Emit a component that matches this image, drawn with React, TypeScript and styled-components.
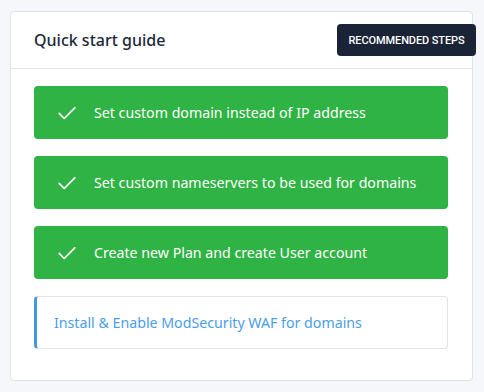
import React from 'react';
import styled, { createGlobalStyle } from 'styled-components';

const GlobalStyle = createGlobalStyle`
  body {
    margin: 0;
    background: #f5f7fb;
    font-family: 'Noto Sans', 'Inter', sans-serif;
  }
`;

const Page = styled.div`
  width: 484px;
  height: 392px;
  padding: 11px 11px 0 10px;
  box-sizing: border-box;
`;

const Card = styled.div`
  position: relative;
  width: 463px;
  height: 370px;
  box-sizing: border-box;
  background: #fff;
  border: 1px solid #dfe3ea;
  border-radius: 4px;
`;

const CardHeader = styled.div`
  height: 56px;
  display: flex;
  align-items: center;
  padding: 0 23px;
  border-bottom: 1px solid #dfe3ea;
`;

const Title = styled.h3`
  margin: 0 0 1px;
  font-size: 16px;
  font-weight: 500;
  color: #1d273b;
`;

const Tooltip = styled.div`
  position: absolute;
  top: 12px;
  right: -4px;
  width: 139px;
  height: 32px;
  box-sizing: border-box;
  display: flex;
  align-items: center;
  justify-content: center;
  background: #1b2436;
  border-radius: 4px;
  color: #fff;
  font-family: 'Roboto', 'Noto Sans', sans-serif;
  font-size: 11px;
  font-weight: 500;
  letter-spacing: -0.1px;
`;

const StepList = styled.div`
  display: flex;
  flex-direction: column;
  gap: 17px;
  padding: 17px 24px 0 23px;
`;

const Step = styled.div<{ $done?: boolean }>`
  height: 53px;
  box-sizing: border-box;
  display: flex;
  align-items: center;
  border-radius: 4px;
  font-size: 14.2px;
  background: ${(p) => (p.$done ? '#2fb344' : '#fff')};
  color: ${(p) => (p.$done ? '#fff' : '#4a9ee6')};
  border: ${(p) => (p.$done ? 'none' : '1px solid #dfe3ea')};
  border-left: ${(p) => (p.$done ? 'none' : '3px solid #4299e1')};
  padding-left: ${(p) => (p.$done ? '22px' : '17px')};
`;

const CheckIcon = styled.svg`
  width: 22px;
  height: 22px;
  margin-right: 16px;
  flex-shrink: 0;
`;

const Check = () => (
  <CheckIcon viewBox="0 0 24 24" fill="none" stroke="#fff" strokeWidth={1.9} strokeLinecap="round" strokeLinejoin="round">
    <path d="M3.5 12.5l5.5 5.5L20.5 6.5" />
  </CheckIcon>
);

const steps = [
  { text: 'Set custom domain instead of IP address', done: true },
  { text: 'Set custom nameservers to be used for domains', done: true },
  { text: 'Create new Plan and create User account', done: true },
  { text: 'Install & Enable ModSecurity WAF for domains', done: false },
];

const App = () => {
  return (
    <Page>
      <GlobalStyle />
      <Card>
        <CardHeader>
          <Title>Quick start guide</Title>
        </CardHeader>
        <Tooltip>RECOMMENDED STEPS</Tooltip>
        <StepList>
          {steps.map((s) => (
            <Step key={s.text} $done={s.done}>
              {s.done && <Check />}
              {s.text}
            </Step>
          ))}
        </StepList>
      </Card>
    </Page>
  );
};

export default App;
